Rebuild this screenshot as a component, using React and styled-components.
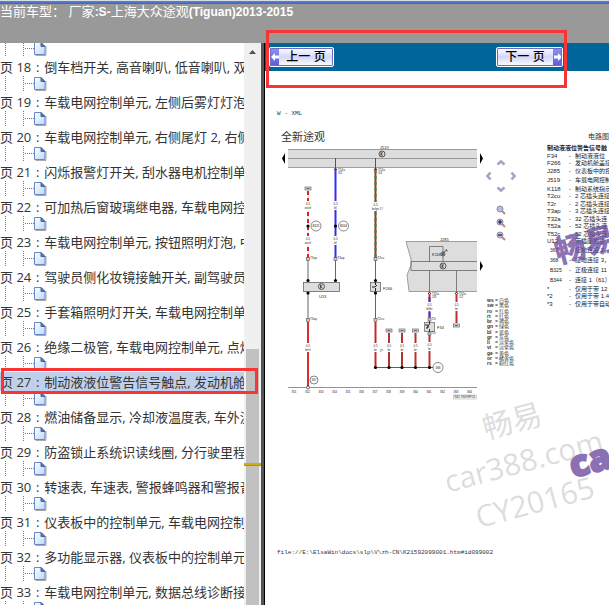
import React, { useState } from "react";
import styled, { createGlobalStyle } from "styled-components";

const GlobalStyle = createGlobalStyle`
  * {
    box-sizing: border-box;
  }
  html, body, #root {
    height: 100%;
    margin: 0;
  }
  body {
    overflow: hidden;
    background: #fff;
  }
  button {
    padding: 0;
    border: none;
    background: none;
    cursor: pointer;
  }
`;

const sans = `"Liberation Sans", "Noto Sans CJK SC", sans-serif`;
const serif = `"Liberation Serif", "Noto Sans CJK SC", serif`;

const Page = styled.div`
  position: relative;
  height: 100vh;
  display: flex;
  flex-direction: column;
  overflow: hidden;
`;

const Header = styled.header`
  flex: 0 0 43px;
  border-top: 1px solid #d9dde6;
  background: linear-gradient(#5b83cf, #3d63bd) top / 100% 3px no-repeat #999;
  color: #fff;
  font: 400 13px/21px ${sans};
  white-space: nowrap;
`;

const Model = styled.h1`
  margin: 0;
  font: inherit;
`;

const Latin = styled.b`
  font-size: 12px;
`;

const Main = styled.div`
  flex: 1;
  min-height: 0;
  display: flex;
`;

/* left tree */

const Sidebar = styled.aside`
  flex: 0 0 265px;
  min-width: 0;
  min-height: 0;
  display: flex;
  padding-right: 3px;
  border-right: 1px solid #000;
  background: #555;
`;

const Tree = styled.ul`
  flex: 1;
  min-width: 0;
  margin: 0;
  padding: 0;
  overflow: hidden;
  list-style: none;
  background: #fff;
`;

const Branch = styled.div`
  height: ${({ $first }) => ($first ? 14 : 16)}px;
  overflow: hidden;
  display: flex;
  align-items: flex-end;
  svg {
    flex: none;
    display: block;
  }
`;

const Leaf = styled.button`
  display: block;
  width: 100%;
  height: 19px;
  overflow: hidden;
  text-align: left;
  white-space: nowrap;
  color: #333;
  font: 400 13px/21px "Open Sans", "Noto Sans CJK SC", sans-serif;
  background: ${({ $active }) => ($active ? "#c1d0ea" : "transparent")};
`;

const Colon = styled.span`
  display: inline-block;
  width: 13px;
  text-align: center;
`;

const Scroll = styled.div`
  flex: 0 0 17px;
  display: flex;
  flex-direction: column;
  align-items: center;
  background: #f0f0f0;
`;

const ScrollUp = styled.button`
  width: 17px;
  height: 17px;
  display: flex;
  align-items: center;
  justify-content: center;
`;

const Track = styled.div`
  flex: 1;
  width: 17px;
  display: grid;
  grid-template-rows: 53fr 47fr;
  justify-items: center;
`;

const Thumb = styled.div`
  grid-row: 2;
  width: 13px;
  padding-top: 114px;
  background: #c1c1c1;
`;

const ThumbMark = styled.div`
  height: 3px;
  margin: 0 -2px;
  background: #cdae08;
  border-bottom: 1px solid #b39500;
`;

/* right pane */

const Viewer = styled.section`
  flex: 1;
  min-width: 0;
  display: flex;
  flex-direction: column;
`;

const Toolbar = styled.nav`
  flex: 0 0 28px;
  display: flex;
  align-items: center;
  gap: 162px;
  padding: 0 4px;
  background: #069;
`;

const PageButton = styled.button`
  display: flex;
  flex: 0 0 auto;
  flex-direction: ${({ $next }) => ($next ? "row-reverse" : "row")};
  width: ${({ $next }) => ($next ? 67 : 65)}px;
  height: 20px;
  border: 1px solid #fff;
  outline: 1px solid #6d6bc0;
  outline-offset: -2px;
  border-radius: 2px;
  background: linear-gradient(#fff, #d4d6fb 50%, #fff);
  overflow: hidden;
  color: #000;
  font: 500 12px/18px ${sans};
`;

const Arrow = styled.span`
  flex: 0 0 9px;
  height: 18px;
  display: flex;
  align-items: center;
  justify-content: center;
  background: linear-gradient(#8f92f0, #5a5cdc);
`;

const ButtonText = styled.span`
  flex: 1;
  white-space: pre;
`;

const Document = styled.article`
  flex: 1;
  min-height: 0;
  padding: 38px 0 0 12px;
  overflow: hidden;
  color: #333;
`;

const Mono = styled.p`
  margin: 0;
  font: 400 6px/10px "Liberation Mono", monospace;
  color: #333;
`;

const Sheet = styled.div`
  display: grid;
  grid-template-columns: 204px 62px 1fr;
  padding-left: 4px;
  margin: 10px 0 143px;
`;

const SheetTitle = styled.h2`
  grid-column: 1 / 3;
  margin: 0;
  font: 400 11px/16px ${serif};
`;

const Circuit = styled.h3`
  margin: 0;
  padding-left: 41px;
  font: 400 7px/16px ${serif};
  white-space: nowrap;
`;

const Side = styled.div`
  display: flex;
  flex-direction: column;
  align-items: flex-start;
`;

const Pad = styled.div`
  display: grid;
  grid-template-columns: repeat(3, 12px);
  grid-template-rows: repeat(3, 13px);
  margin: 11px 0 0 -2px;
`;

const PadButton = styled.button`
  grid-area: ${({ $area }) => $area};
  display: flex;
  align-items: center;
  justify-content: center;
`;

const Zooms = styled.div`
  display: flex;
  flex-direction: column;
  gap: 3px;
  margin: 10px 0 0 11px;
`;

const ZoomButton = styled.button`
  display: block;
  width: 10px;
  height: 10px;
  svg {
    display: block;
  }
`;

const Legend = styled.dl`
  display: grid;
  grid-template-columns: 8px 4px auto;
  align-content: space-between;
  height: 68px;
  margin: 57px 0 0 2px;
  font: 400 5px/5px ${sans};
  white-space: nowrap;
  dt, dd {
    margin: 0;
  }
  dt {
    font-weight: 700;
  }
`;

const Parts = styled.table`
  align-self: start;
  justify-self: start;
  border-collapse: collapse;
  font: 400 6px/7px ${sans};
  color: #222;
  white-space: nowrap;
  caption {
    text-align: left;
    font-weight: 700;
  }
  th, td {
    padding: 0;
    text-align: left;
    font-weight: 400;
    vertical-align: middle;
  }
  th {
    min-width: 22px;
  }
  td:nth-child(2) {
    min-width: 6px;
  }
`;

const rowHeights = { part: 9, ref: 10 };

const PartRow = styled.tr`
  height: ${({ $kind }) => rowHeights[$kind] || 8}px;
  &:nth-child(even) {
    height: ${({ $kind }) => rowHeights[$kind] || 7}px;
  }
  th {
    padding-left: ${({ $kind }) => ($kind === "ref" ? 3 : 0)}px;
    font-size: ${({ $kind }) => ($kind === "ref" ? 5 : 6)}px;
  }
`;

/* things lying over the page */

const Marker = styled.div`
  position: absolute;
  left: ${({ $x }) => $x}px;
  top: ${({ $y }) => $y}px;
  width: ${({ $w }) => $w}px;
  height: ${({ $h }) => $h}px;
  border: 3px solid #fa3434;
  pointer-events: none;
`;

const Stamp = styled.div`
  position: absolute;
  left: ${({ $x }) => $x}px;
  top: ${({ $y }) => $y}px;
  transform: rotate(-15deg);
  white-space: nowrap;
  pointer-events: none;
  text-align: center;
  color: rgba(120, 120, 120, 0.27);
  font: 400 30px/41px "Open Sans", "Noto Sans CJK SC", sans-serif;
`;

const Brand = styled(Stamp)`
  color: rgba(110, 76, 160, 0.8);
  font-size: 31px;
  font-weight: 900;
`;

const BrandWord = styled(Stamp)`
  font: 800 36px/40px "Open Sans", sans-serif;
  -webkit-text-stroke: 2px #8b70b3;
  color: #8b70b3;
`;

const pages = [
  [18, "倒车档开关, 高音喇叭, 低音喇叭, 双"],
  [19, "车载电网控制单元, 左侧后雾灯灯泡"],
  [20, "车载电网控制单元, 右侧尾灯 2, 右侧"],
  [21, "闪烁报警灯开关, 刮水器电机控制单"],
  [22, "可加热后窗玻璃继电器, 车载电网控"],
  [23, "车载电网控制单元, 按钮照明灯泡, 中"],
  [24, "驾驶员侧化妆镜接触开关, 副驾驶员"],
  [25, "手套箱照明灯开关, 车载电网控制单"],
  [26, "绝缘二极管, 车载电网控制单元, 点烟"],
  [27, "制动液液位警告信号触点, 发动机舱"],
  [28, "燃油储备显示, 冷却液温度表, 车外温"],
  [29, "防盗锁止系统识读线圈, 分行驶里程"],
  [30, "转速表, 车速表, 警报蜂鸣器和警报音"],
  [31, "仪表板中的控制单元, 车载电网控制"],
  [32, "多功能显示器, 仪表板中的控制单元"],
  [33, "车载电网控制单元, 数据总线诊断接"],
];

const colours = [
  ["ws", "白色"],
  ["sw", "黑色"],
  ["ro", "红色"],
  ["rt", "红色"],
  ["br", "褐色"],
  ["gn", "绿色"],
  ["bl", "蓝色"],
  ["gr", "灰色"],
  ["li", "淡紫色"],
  ["vi", "淡紫色"],
  ["ge", "黄色"],
  ["or", "橘黄色"],
  ["rs", "粉红色"],
];

const parts = [
  ["F34", "制动液液位"],
  ["F266", "发动机舱盖接"],
  ["J285", "仪表板中的控", "part"],
  ["J519", "车载电网控制", "part"],
  ["K118", "制动系统指示"],
  ["T2cu", "2 芯插头连接"],
  ["T2r", "2 芯插头连接"],
  ["T3ap", "3 芯插头连接"],
  ["T32a", "32 芯插头连"],
  ["T52a", "52 芯插头连"],
  ["T52c", "52 芯插头连"],
  ["U13", "带插座的逆"],
  ["367", "接地连接 2，", "ref"],
  ["368", "接地连接 3，", "ref"],
  ["B325", "正极连接 11", "ref"],
  ["B344", "连接 1（61）", "ref"],
  ["*", "仅用于带 12"],
  ["*2", "仅用于带 1.4"],
  ["*3", "仅用于带自动"],
];

const TreeLines = () => (
  <svg width="48" height="16" viewBox="0 0 48 16">
    <defs>
      <linearGradient id="sheet" x1="0" y1="0" x2="1" y2="1">
        <stop offset="0" stopColor="#fff" />
        <stop offset="1" stopColor="#b9d8fa" />
      </linearGradient>
    </defs>
    <path d="M5.5 0V16M23.5 0V16M25 7.5H34" stroke="#777" strokeDasharray="1 1" fill="none" />
    <path d="M35.5 14.5H46V5" stroke="#aaa" fill="none" />
    <path d="M34.5 1.5H41L45 5.5V13.5H34.5Z" fill="url(#sheet)" stroke="#6c86c4" />
    <path d="M41 1.5V5.5H45Z" fill="#5376bd" stroke="#4464a8" />
  </svg>
);

const ArrowShape = ({ flip }) => (
  <svg width="8" height="8" viewBox="0 0 8 8">
    <path
      d="M4 0L8 4L4 8V5.5H0V2.5H4Z"
      fill="#fff"
      transform={flip ? "rotate(180 4 4)" : undefined}
    />
  </svg>
);

const Chevron = ({ angle }) => (
  <svg width="10" height="10" viewBox="0 0 10 10">
    <path
      d="M1.5 6.5L5 3.5L8.5 6.5"
      fill="none"
      stroke="#a3a3c4"
      strokeWidth="2.6"
      transform={`rotate(${angle} 5 5)`}
    />
  </svg>
);

const Lens = ({ sign }) => (
  <svg width="10" height="10" viewBox="0 0 10 10">
    <path d="M6 6L9 9" stroke="#b98a74" strokeWidth="2" />
    <circle cx="4" cy="4" r="3" fill="#b9bce0" stroke="#8b8dac" />
    {sign && <path d={sign} stroke="#222" strokeWidth="1.2" />}
  </svg>
);

// vertical wire with a white break where the cross-section is printed
const Wire = ({ x, y1, y2, color, dash, base, gaps = [], label = "ro" }) => (
  <g>
    {base && <path d={`M${x} ${y1}V${y2}`} stroke={base} strokeWidth="2" />}
    <path d={`M${x} ${y1}V${y2}`} stroke={color} strokeWidth="2" strokeDasharray={dash} />
    {gaps.map((y) => (
      <g key={y}>
        <rect x={x - 3} y={y} width="6" height="9" fill="#fff" />
        <text x={x} y={y + 4} textAnchor="middle">0.5</text>
        <text x={x} y={y + 8} textAnchor="middle">{label}</text>
      </g>
    ))}
  </g>
);

const Dot = ({ x, y }) => <circle cx={x} cy={y} r="1.6" fill="#000" />;

const Ring = ({ x, y, r = 5, children }) => (
  <g>
    <circle cx={x} cy={y} r={r} fill="#fff" stroke="#555" strokeWidth="0.7" />
    <text x={x} y={y + 1} textAnchor="middle">{children}</text>
  </g>
);

const Unit = ({ x, y }) => (
  <g fill="none" stroke="#333" strokeWidth="0.8">
    <circle cx={x} cy={y} r="3" />
    <path d={`M${x - 1} ${y - 2}V${y + 2}M${x + 1} ${y - 1.5}L${x - 1} ${y}L${x + 1} ${y + 1.5}`} />
  </g>
);

const Plug = ({ x, y, children }) => (
  <g>
    <rect x={x - 1.5} y={y - 1.5} width="3" height="3" fill="#ccc" stroke="#555" strokeWidth="0.6" />
    <text x={x + 2} y={y}>{children}</text>
  </g>
);

const End = ({ x, y }) => (
  <g>
    <rect x={x - 3} y={y} width="6" height="3" fill="#ddd" stroke="#555" strokeWidth="0.6" />
    <path d={`M${x - 1.5} ${y + 1.5}H${x + 1.5}`} stroke="#333" strokeWidth="0.7" />
  </g>
);

const Diagram = () => (
  <svg
    width="204"
    height="260"
    viewBox="0 0 204 260"
    fontFamily="Liberation Sans, sans-serif"
    fontSize="3"
    fill="#222"
    role="img"
    aria-label="电路图"
  >
    {/* J519 rail */}
    <rect x="7" y="4" width="189" height="18" fill="#ddd" />
    <path d="M7 4.5H196M7 13.5H196M7 22.5H196" stroke="#888" strokeWidth="0.8" />
    <path d="M4 8V19L1 13.5ZM199 8V19L202 13.5Z" fill="#000" />
    <Unit x={101} y={9} />
    <text x="99" y="4" fontSize="4">J519</text>
    <path d="M54.5 13V25M94.5 13V25" stroke="#555" />
    <path d="M53 25L54.5 23L56 25M93 25L94.5 23L96 25" stroke="#333" fill="none" />
    <text x="57" y="26">T52a</text>
    <text x="57" y="29">/32</text>
    <text x="97" y="26">T52a</text>
    <text x="97" y="29">/14</text>

    {/* upper wires */}
    <End x={27} y={42} />
    <Wire x={27} y1={46} y2={113} base="#eee" color="#e02020" dash="4 3" gaps={[56, 91]} label="ws/rt" />
    <Wire x={54.5} y1={25} y2={113} color="#2f2fee" gaps={[56, 91]} label="bl" />
    <Wire x={94.5} y1={25} y2={113} base="#b52b2b" color="#208a3c" dash="3 3" gaps={[57]} label="br/gn" />
    <text transform="translate(102 65) rotate(-90)">*2</text>
    <Dot x={27} y={81} />
    <Dot x={54.5} y={81} />
    <Ring x={35} y={81}>B325</Ring>
    <Ring x={62.5} y={81}>B344</Ring>
    <path d="M27 115V135M54.5 115V135M94.5 115V135" stroke="#666" />
    <Plug x={27} y={114}>T3ap</Plug>
    <Plug x={54.5} y={114}>T3ap</Plug>
    <Plug x={94.5} y={114}>T2cu</Plug>

    {/* U13 and F266 */}
    <g fill="#ddd" stroke="#666" strokeWidth="0.8">
      <rect x="22.5" y="137.5" width="36" height="9" />
      <rect x="89.5" y="137.5" width="10" height="9" />
    </g>
    <Unit x={40.5} y={141.5} />
    <path d="M91 142H94L96 140M94.5 137V140M94.5 143V146" stroke="#222" fill="none" />
    <text x="38" y="153" fontSize="4">U13</text>
    <text x="102" y="145" fontSize="4">F266</text>
    <Dot x={27} y={135.5} />
    <Dot x={54.5} y={135.5} />
    <Dot x={94.5} y={135.5} />
    <path d="M27 147V174M94.5 147V174" stroke="#666" />
    <Dot x={27} y={148} />
    <Dot x={94.5} y={148} />

    {/* lower wires */}
    <Wire x={27} y1={177} y2={242} color="#dd2c2c" gaps={[198]} label="br/rt" />
    <Plug x={27} y={175}>T3ap</Plug>
    <Wire x={94.5} y1={177} y2={222} color="#c42a2a" gaps={[198]} label="br" />
    <Plug x={94.5} y={175}>T2cu</Plug>
    <text transform="translate(102 207) rotate(-90)">*3</text>
    {[108, 121, 134.5].map((x) => (
      <g key={x}>
        <Wire x={x} y1={188} y2={222} color="#b33232" gaps={[198]} label="br" />
        <End x={x} y={184} />
      </g>
    ))}
    <Ring x={33} y={235} r={4}>367</Ring>

    {/* J285 */}
    <path d="M125 96.5H196V146.5H128L126 130L130 120V114Z" fill="#ddd" />
    <path d="M196 96.5H125L130 114V120L126 130L128 146.5H196" fill="none" stroke="#888" strokeWidth="0.8" />
    <path d="M196 116.5H130V125.5H196M148.5 116.5V101.5H162V116.5M148.5 125.5V148M175.5 125.5V148" fill="none" stroke="#666" strokeWidth="0.8" />
    <path d="M199 116V126L202 121Z" fill="#000" />
    <Unit x={162} y={121} />
    <text x="159" y="96" fontSize="4">J285</text>
    <circle cx="162" cy="109" r="2" fill="none" stroke="#333" strokeWidth="0.7" />
    <path d="M160.5 107.5L163.5 110.5M160.5 110.5L163.5 107.5M163 107L166 105M164.5 105H166V106.5" stroke="#333" strokeWidth="0.7" fill="none" />
    <text x="151" y="111" fontSize="4">K118</text>
    <path d="M147 149L148.5 147L150 149M174 149L175.5 147L177 149" stroke="#333" fill="none" />
    <text x="151" y="150">T32a</text>
    <text x="151" y="153">/28</text>
    <text x="178" y="150">T32a</text>
    <text x="178" y="153">/12</text>
    <Wire x={148.5} y1={149} y2={175} base="#c03030" color="#3838e8" dash="0 3 5 10 5 9" gaps={[157]} label="bl/br" />
    <Wire x={175.5} y1={149} y2={178} color="#b93030" gaps={[157]} label="br" />
    <End x={175.5} y={179} />
    <Plug x={148.5} y={174.5}>T2r</Plug>
    <rect x="143.5" y="177.5" width="10" height="9" fill="#ddd" stroke="#777" strokeWidth="0.8" />
    <path d="M148.5 176V179L146 183M144 180H147V183H145M148.5 184V187" stroke="#222" strokeWidth="0.9" fill="none" />
    <text x="156" y="184" fontSize="4">F34</text>
    <Wire x={148.5} y1={189} y2={222} color="#b93030" gaps={[197]} label="br" />
    <Plug x={148.5} y={188.5}>T2r</Plug>

    {/* ground bus and track */}
    <path d="M94.5 222.5H153" stroke="#333" strokeWidth="0.8" />
    {[94.5, 108, 121, 134.5, 148.5].map((x) => (
      <Dot key={x} x={x} y={222.5} />
    ))}
    <Ring x={157} y={222.5}>368</Ring>
    <path d="M7 242.5H196" stroke="#777" strokeWidth="0.8" />
    <circle cx="27" cy="242.5" r="1.5" fill="#fff" stroke="#333" strokeWidth="0.7" />
    {Array.from({ length: 14 }, (_, i) => (
      <text key={i} x={13 + i * 13.5} y="248" textAnchor="middle">
        {351 + i}
      </text>
    ))}
    <rect x="172.5" y="250" width="23" height="4" fill="#fff" stroke="#888" strokeWidth="0.4" />
    <text x="184" y="253" textAnchor="middle">N62-99099P/01</text>
  </svg>
);

const App = () => {
  const [current, setCurrent] = useState(27);

  return (
    <Page>
      <GlobalStyle />
      <Header>
        <Model>
          当前车型： 厂家<Latin>:S-</Latin>上海大众途观<Latin>(Tiguan)2013-2015</Latin>
        </Model>
      </Header>
      <Main>
        <Sidebar>
          <Tree>
            <li>
              <Branch $first>
                <TreeLines />
              </Branch>
            </li>
            {pages.map(([no, title]) => (
              <li key={no}>
                <Leaf $active={no === current} onClick={() => setCurrent(no)}>
                  页 {no}
                  <Colon>:</Colon>
                  {title}
                </Leaf>
                <Branch>
                  <TreeLines />
                </Branch>
              </li>
            ))}
          </Tree>
          <Scroll>
            <ScrollUp aria-label="向上滚动">
              <svg width="7" height="4" viewBox="0 0 7 4">
                <path d="M0 4L3.5 0L7 4Z" fill="#505050" />
              </svg>
            </ScrollUp>
            <Track>
              <Thumb>
                <ThumbMark />
              </Thumb>
            </Track>
          </Scroll>
        </Sidebar>
        <Viewer>
          <Toolbar>
            <PageButton onClick={() => setCurrent(Math.max(18, current - 1))}>
              <Arrow>
                <ArrowShape flip />
              </Arrow>
              <ButtonText>上一 页</ButtonText>
            </PageButton>
            <PageButton $next onClick={() => setCurrent(Math.min(33, current + 1))}>
              <Arrow>
                <ArrowShape />
              </Arrow>
              <ButtonText>下一 页</ButtonText>
            </PageButton>
          </Toolbar>
          <Document>
            <Mono>W - XML</Mono>
            <Sheet>
              <SheetTitle>全新途观</SheetTitle>
              <Circuit>电路图</Circuit>
              <Diagram />
              <Side>
                <Pad>
                  <PadButton $area="1 / 2" aria-label="上">
                    <Chevron angle={0} />
                  </PadButton>
                  <PadButton $area="2 / 1" aria-label="左">
                    <Chevron angle={-90} />
                  </PadButton>
                  <PadButton $area="2 / 3" aria-label="右">
                    <Chevron angle={90} />
                  </PadButton>
                  <PadButton $area="3 / 2" aria-label="下">
                    <Chevron angle={180} />
                  </PadButton>
                </Pad>
                <Zooms>
                  <ZoomButton aria-label="缩放">
                    <Lens />
                  </ZoomButton>
                  <ZoomButton aria-label="放大">
                    <Lens sign="M2 4H6M4 2V6" />
                  </ZoomButton>
                  <ZoomButton aria-label="缩小">
                    <Lens sign="M2 4H6" />
                  </ZoomButton>
                </Zooms>
                <Legend>
                  {colours.map(([code, name]) => (
                    <React.Fragment key={code}>
                      <dt>{code}</dt>
                      <dd>=</dd>
                      <dd>{name}</dd>
                    </React.Fragment>
                  ))}
                </Legend>
              </Side>
              <Parts>
                <caption>制动液液位警告信号触</caption>
                <tbody>
                  {parts.map(([code, name, kind]) => (
                    <PartRow key={code} $kind={kind}>
                      <th scope="row">{code}</th>
                      <td>-</td>
                      <td>{name}</td>
                    </PartRow>
                  ))}
                </tbody>
              </Parts>
            </Sheet>
            <Mono>file://E:\ElsaWin\docs\slp\V\zh-CN\K21592099001.htm#id099002</Mono>
          </Document>
        </Viewer>
      </Main>

      <Stamp $x={482} $y={400}>畅易</Stamp>
      <Stamp $x={442} $y={440}>car388.com</Stamp>
      <Stamp $x={474} $y={481}>CY20165</Stamp>
      <Brand $x={554} $y={224}>畅易</Brand>
      <BrandWord $x={569} $y={440}>ca</BrandWord>
      <Marker $x={266} $y={30} $w={301} $h={58} />
      <Marker $x={1} $y={368} $w={257} $h={26} />
    </Page>
  );
};

export default App;
